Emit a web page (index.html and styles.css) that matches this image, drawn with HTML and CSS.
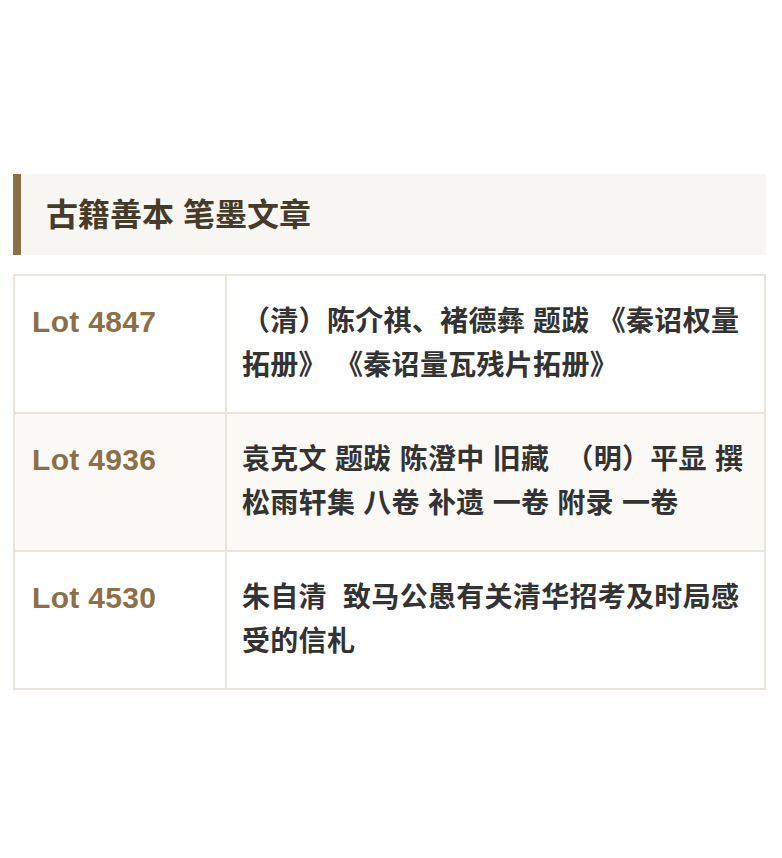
FILE: index.html
```html
<!DOCTYPE html>
<html lang="zh-CN">
<head>
<meta charset="utf-8">
<link rel="stylesheet" href="styles.css">
</head>
<body>
<div class="page">
  <h2 class="section-title">古籍善本 笔墨文章</h2>
  <table class="lots">
    <tr>
      <td class="lot">Lot 4847</td>
      <td class="desc">（清）陈介祺、褚德彝 题跋 《秦诏权量拓册》 《秦诏量瓦残片拓册》</td>
    </tr>
    <tr class="alt">
      <td class="lot">Lot 4936</td>
      <td class="desc">袁克文 题跋 陈澄中 旧藏&nbsp; （明）平显 撰 松雨轩集 八卷 补遗 一卷 附录 一卷</td>
    </tr>
    <tr>
      <td class="lot">Lot 4530</td>
      <td class="desc">朱自清&nbsp; 致马公愚有关清华招考及时局感受的信札</td>
    </tr>
  </table>
</div>
</body>
</html>
```
FILE: styles.css
```css
html, body {
  margin: 0;
  padding: 0;
  background: #ffffff;
}
body {
  font-family: "Liberation Sans", "Noto Sans CJK SC", sans-serif;
}
.page {
  padding: 174px 16px 0 13px;
}
.section-title {
  margin: 0;
  height: 81px;
  box-sizing: border-box;
  display: flex;
  align-items: center;
  padding-left: 25px;
  padding-bottom: 6px;
  background: #f8f6f2;
  border-left: 8px solid #8b6f47;
  font-size: 32px;
  font-weight: 700;
  color: #463a29;
}
.lots {
  margin-top: 19px;
  width: 100%;
  border-collapse: collapse;
  border: 2px solid #ebe4da;
}
.lots td {
  border: 2px solid #ebe4da;
  vertical-align: top;
  padding: 24px 17px;
  height: 136px;
  box-sizing: border-box;
}
.lots .alt td {
  background: #fbf9f5;
}
.lot {
  width: 212px;
  font-size: 30px;
  font-weight: 700;
  color: #8b6f47;
  line-height: 44px;
  letter-spacing: 0.3px;
}
.lots td.desc {
  padding-left: 15px;
  padding-right: 14px;
  font-size: 28px;
  font-weight: 700;
  color: #333333;
  line-height: 44px;
  letter-spacing: 0.3px;
}
```
